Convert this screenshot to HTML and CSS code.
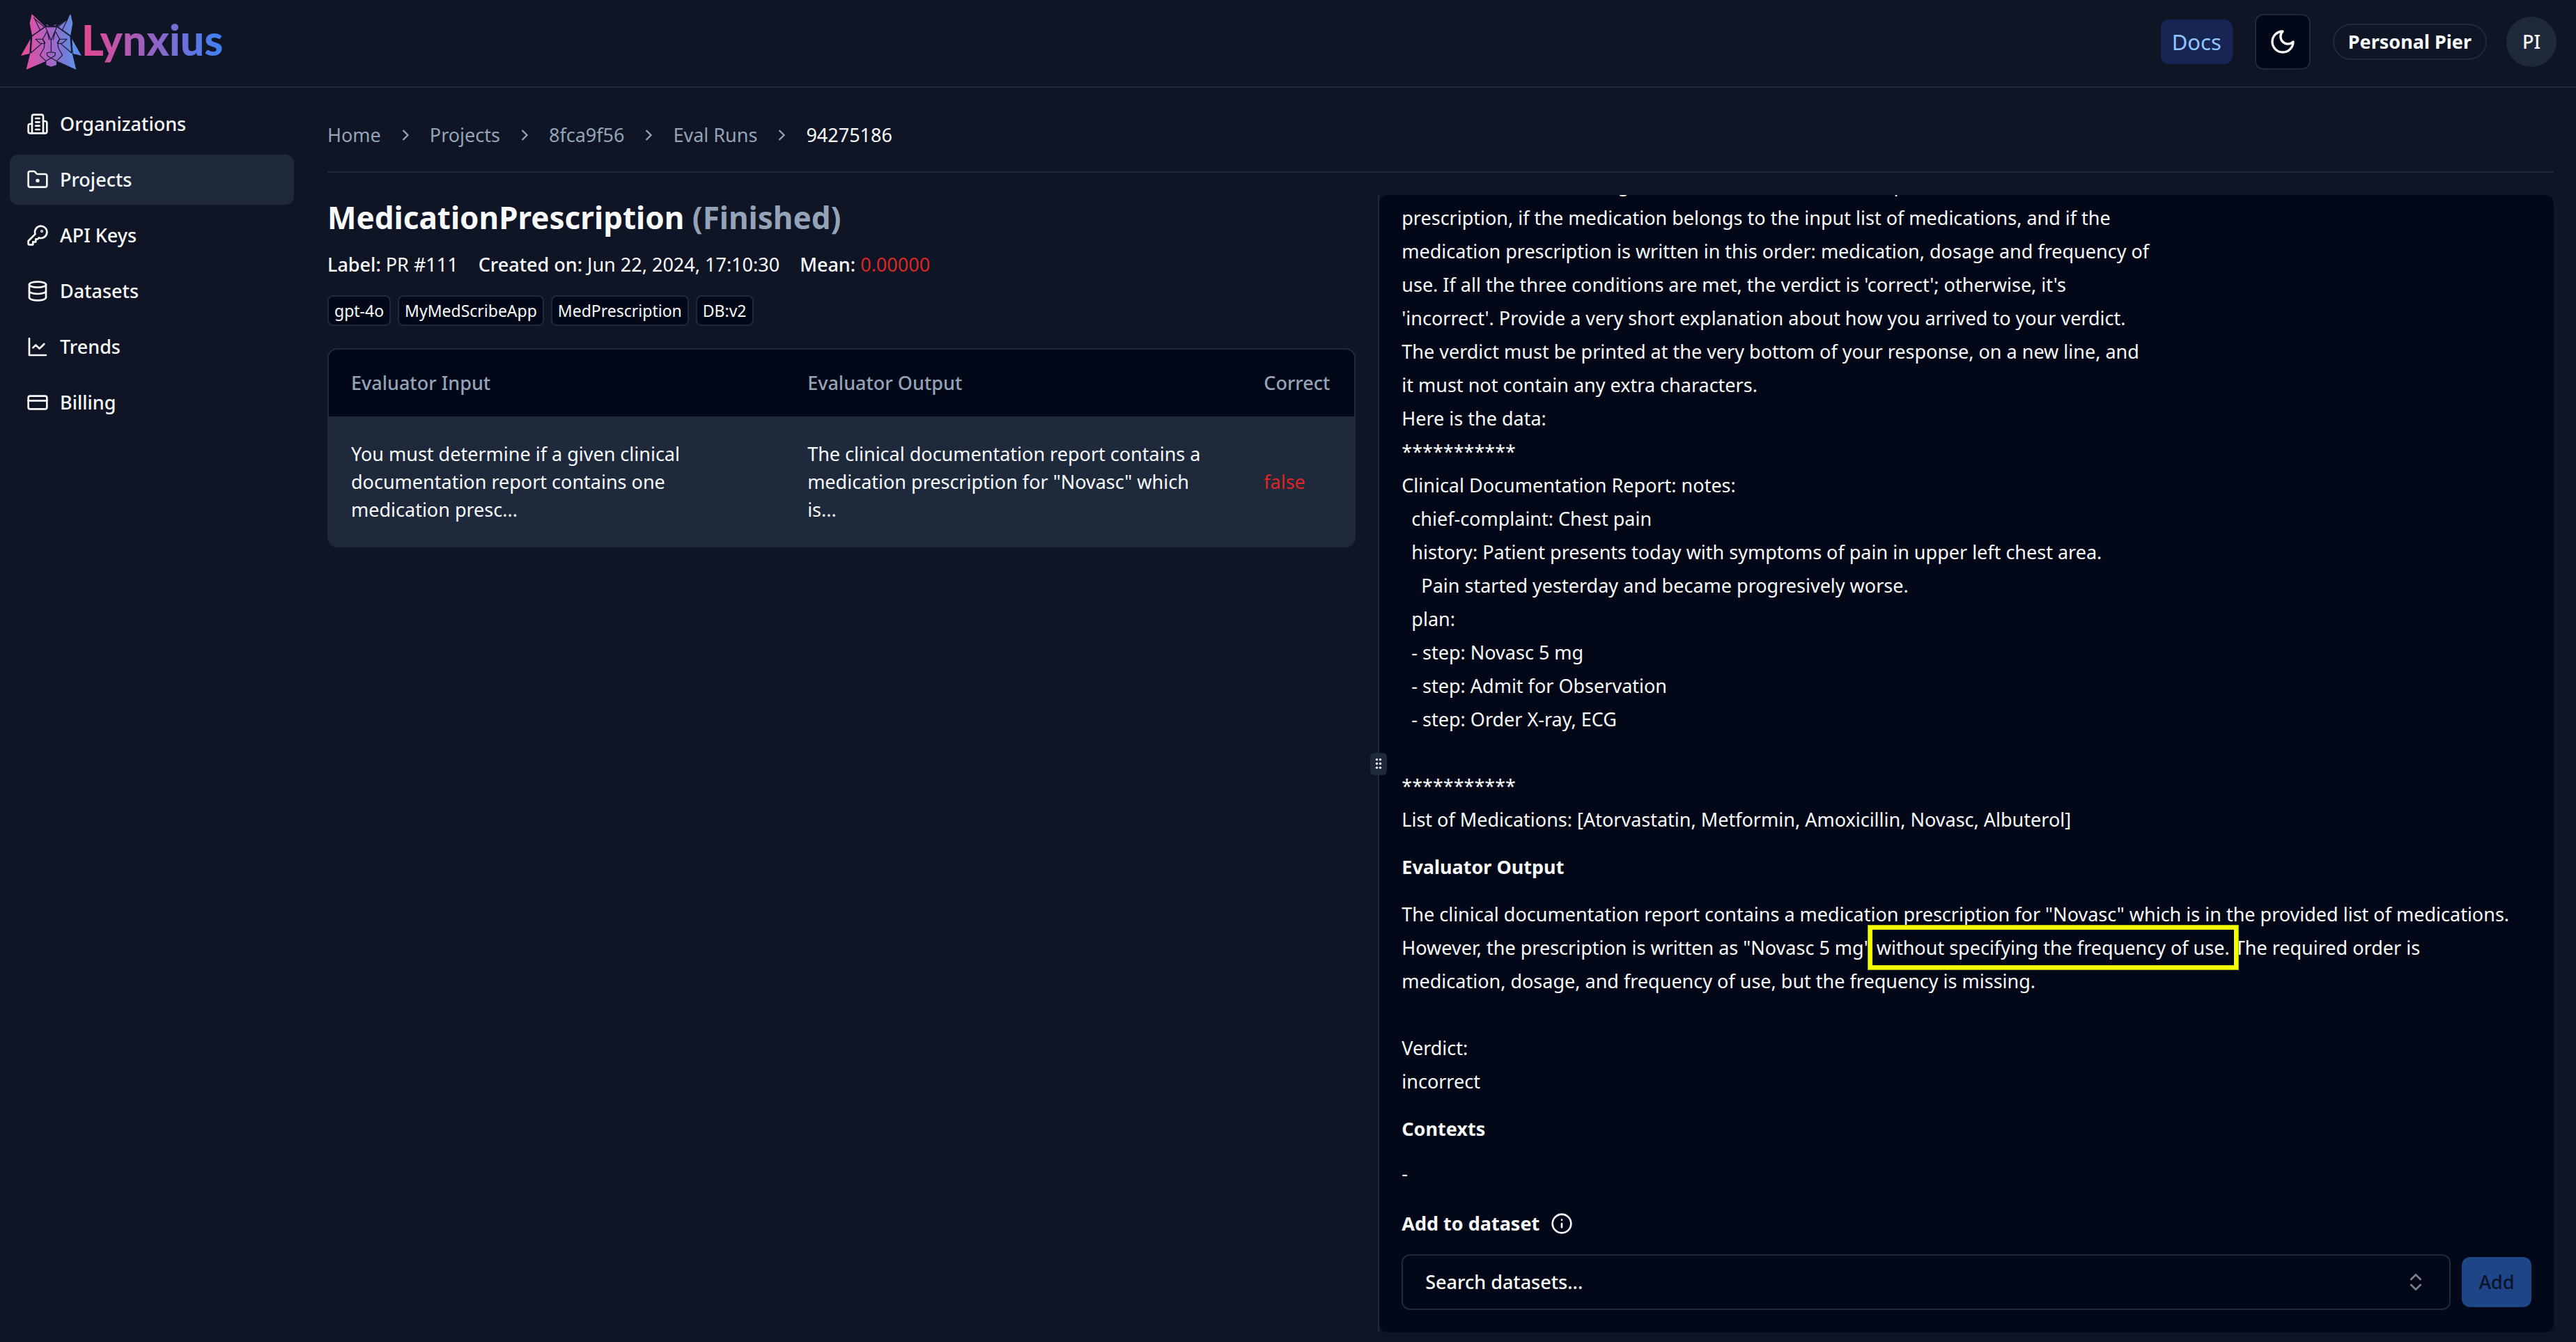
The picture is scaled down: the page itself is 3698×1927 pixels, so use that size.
FILE: index.html
```html
<!DOCTYPE html>
<html lang="en">
<head>
<meta charset="utf-8">
<meta name="viewport" content="width=device-width, initial-scale=1">
<title>MedicationPrescription - Lynxius</title>
<link rel="stylesheet" href="styles.css">
</head>
<body>
<header class="topbar">
  <a class="brand" href="#">
    <svg class="brand-mark" viewBox="90 60 261 240" aria-hidden="true">
      <defs>
        <linearGradient id="lynx" gradientUnits="userSpaceOnUse" x1="90" y1="0" x2="351" y2="0">
          <stop offset="0" stop-color="#f04a98"/>
          <stop offset="0.5" stop-color="#a565c8"/>
          <stop offset="0.75" stop-color="#6f7fd8"/>
          <stop offset="0.85" stop-color="#6590e6"/>
          <stop offset="1" stop-color="#5a86ee"/>
        </linearGradient>
      </defs>
      <g fill="url(#lynx)">
        <path d="M137 60 193 113 138 152 128 100Z"/>
        <path d="M304 60 313 100 304 152 248 113 290 83Z"/>
        <path d="M131 168 90 240 127 231Z"/>
        <path d="M310 168 351 240 314 231Z"/>
        <path d="M195 104 210 109 205 112Z"/>
        <path d="M246 104 231 109 236 112Z"/>
        <path d="M137 156 195 115H246L303 156 309 222 328 300 247 263 243 266V280L220 287 199 280V263L113 300 132 222Z"/>
      </g>
      <g fill="none" stroke="#0e1525" stroke-width="3.2" stroke-linejoin="round">
        <path d="M146 74 172 128M151 83 191 116M295 74 269 128M290 83 250 116"/>
        <path d="M137 156 195 116H246L303 156"/>
        <path d="M196 116 220 174 245 116M220 172V224M203 134 212 172M238 134 229 172"/>
        <path d="M203 134 184 169 193 188M238 134 257 169 248 188"/>
        <path d="M153 169H184L194 184 190 188 172 186Z"/>
        <path d="M288 169H257L247 184 251 188 269 186Z"/>
        <path d="M137 156 133 228 180 187M303 156 308 228 261 187"/>
        <path d="M192 188 190 206 172 238 197 263M249 188 251 206 269 238 244 263"/>
        <path d="M202 228Q220 222 239 228L236 240 220 250 204 240ZM220 250 197 263M220 250 244 263"/>
      </g>
    </svg>
    <span class="brand-name">Lynxius</span>
  </a>
  <div class="topbar-actions">
    <a class="docs" href="#">Docs</a>
    <button class="theme" type="button" aria-label="Toggle theme">
      <svg class="icon" viewBox="0 0 24 24"><path d="M12 3a6 6 0 0 0 9 9 9 9 0 1 1-9-9Z"/></svg>
    </button>
    <span class="user">Personal Pier</span>
    <button class="avatar" type="button">PI</button>
  </div>
</header>

<div class="layout">
  <nav class="sidebar" aria-label="Main">
    <a class="nav-item" href="#">
      <svg class="icon" viewBox="0 0 24 24"><path d="M6 22V4a2 2 0 0 1 2-2h8a2 2 0 0 1 2 2v18Z"/><path d="M6 12H4a2 2 0 0 0-2 2v6a2 2 0 0 0 2 2h2"/><path d="M18 9h2a2 2 0 0 1 2 2v9a2 2 0 0 1-2 2h-2"/><path d="M10 6h4M10 10h4M10 14h4M10 18h4"/></svg>
      Organizations
    </a>
    <a class="nav-item active" href="#" aria-current="page">
      <svg class="icon" viewBox="0 0 24 24"><path d="M4 20h16a2 2 0 0 0 2-2V8a2 2 0 0 0-2-2h-7.930a2 2 0 0 1-1.660-.9l-.820-1.200A2 2 0 0 0 7.930 3H4a2 2 0 0 0-2 2v13c0 1.100.9 2 2 2Z"/><circle cx="12" cy="13" r="1"/></svg>
      Projects
    </a>
    <a class="nav-item" href="#">
      <svg class="icon" viewBox="0 0 24 24"><path d="M2 18v3c0 .6.4 1 1 1h4v-3h3v-3h2l1.400-1.400a6.500 6.500 0 1 0-4-4Z"/><circle cx="16.500" cy="7.500" r=".5"/></svg>
      API Keys
    </a>
    <a class="nav-item" href="#">
      <svg class="icon" viewBox="0 0 24 24"><ellipse cx="12" cy="5" rx="9" ry="3"/><path d="M3 5v14a9 3 0 0 0 18 0V5"/><path d="M3 12a9 3 0 0 0 18 0"/></svg>
      Datasets
    </a>
    <a class="nav-item" href="#">
      <svg class="icon" viewBox="0 0 24 24"><path d="M3 3v18h18"/><path d="m19 9-5 5-4-4-3 3"/></svg>
      Trends
    </a>
    <a class="nav-item" href="#">
      <svg class="icon" viewBox="0 0 24 24"><rect width="20" height="14" x="2" y="5" rx="2"/><path d="M2 10h20"/></svg>
      Billing
    </a>
  </nav>

  <main class="content">
    <nav class="breadcrumb" aria-label="Breadcrumb">
      <a href="#">Home</a>
      <svg class="chevron" viewBox="0 0 24 24"><path d="m9 18 6-6-6-6"/></svg>
      <a href="#">Projects</a>
      <svg class="chevron" viewBox="0 0 24 24"><path d="m9 18 6-6-6-6"/></svg>
      <a href="#">8fca9f56</a>
      <svg class="chevron" viewBox="0 0 24 24"><path d="m9 18 6-6-6-6"/></svg>
      <a href="#">Eval Runs</a>
      <svg class="chevron" viewBox="0 0 24 24"><path d="m9 18 6-6-6-6"/></svg>
      <span class="current">94275186</span>
    </nav>

    <div class="panes">
      <section class="summary">
        <h1>MedicationPrescription <span class="status">(Finished)</span></h1>
        <p class="meta">
          <span><b>Label:</b> PR #111</span>
          <span><b>Created on:</b> Jun 22, 2024, 17:10:30</span>
          <span><b>Mean:</b> <span class="bad">0.00000</span></span>
        </p>
        <ul class="tags">
          <li>gpt-4o</li>
          <li>MyMedScribeApp</li>
          <li>MedPrescription</li>
          <li>DB:v2</li>
        </ul>
        <div class="table-card">
          <table>
            <thead>
              <tr><th class="wide">Evaluator Input</th><th class="wide">Evaluator Output</th><th>Correct</th></tr>
            </thead>
            <tbody>
              <tr>
                <td>You must determine if a given clinical documentation report contains one medication presc...</td>
                <td>The clinical documentation report contains a medication prescription for "Novasc" which is...</td>
                <td class="bad">false</td>
              </tr>
            </tbody>
          </table>
        </div>
      </section>

      <div class="divider" role="separator" aria-orientation="vertical">
        <span class="grip">
          <svg viewBox="0 0 12 20"><circle cx="3" cy="3" r="2"/><circle cx="9" cy="3" r="2"/><circle cx="3" cy="10" r="2"/><circle cx="9" cy="10" r="2"/><circle cx="3" cy="17" r="2"/><circle cx="9" cy="17" r="2"/></svg>
        </span>
      </div>

      <section class="detail">
        <p class="prose">You must determine if a given clinical documentation report contains one medication
prescription, if the medication belongs to the input list of medications, and if the
medication prescription is written in this order: medication, dosage and frequency of
use. If all the three conditions are met, the verdict is 'correct'; otherwise, it's
'incorrect'. Provide a very short explanation about how you arrived to your verdict.
The verdict must be printed at the very bottom of your response, on a new line, and
it must not contain any extra characters.
Here is the data:
***********
Clinical Documentation Report: notes:
  chief-complaint: Chest pain
  history: Patient presents today with symptoms of pain in upper left chest area.
    Pain started yesterday and became progresively worse.
  plan:
  - step: Novasc 5 mg
  - step: Admit for Observation
  - step: Order X-ray, ECG

***********
List of Medications: [Atorvastatin, Metformin, Amoxicillin, Novasc, Albuterol]</p>
        <h2>Evaluator Output</h2>
        <p class="prose">The clinical documentation report contains a medication prescription for "Novasc" which is in the provided list of medications.
However, the prescription is written as "Novasc 5 mg" <span class="marked">without specifying the frequency of use.</span> The required order is
medication, dosage, and frequency of use, but the frequency is missing.

Verdict:
incorrect</p>
        <h2>Contexts</h2>
        <p class="contexts">-</p>
        <h2 class="dataset-title">Add to dataset
          <svg class="icon" viewBox="0 0 24 24"><circle cx="12" cy="12" r="10"/><path d="M12 16v-4M12 8h.01"/></svg>
        </h2>
        <div class="dataset-form">
          <button class="combo" type="button" aria-haspopup="listbox">
            Search datasets...
            <svg class="icon" viewBox="0 0 24 24"><path d="m7 15 5 5 5-5M7 9l5-5 5 5"/></svg>
          </button>
          <button class="add" type="button" disabled>Add</button>
        </div>
      </section>
    </div>
  </main>
</div>
</body>
</html>
```

FILE: styles.css
```css
:root {
  --page: #0f1525;
  --surface: #020817;
  --line: #1e293b;
  --text: #f8fafc;
  --muted: #94a3b8;
  --bad: #dc2626;
}

* { box-sizing: border-box; }

body {
  margin: 0;
  height: 100vh;
  display: flex;
  flex-direction: column;
  background: var(--page);
  color: var(--text);
  font: 400 27px/40px "Noto Sans", "Open Sans", sans-serif;
}

a { color: inherit; text-decoration: none; }
button { font: inherit; color: inherit; border: 0; margin: 0; }
h1, h2, p, ul { margin: 0; padding: 0; }
b { font-weight: 500; }

.icon {
  flex: none;
  width: 32px;
  height: 32px;
  fill: none;
  stroke: currentColor;
  stroke-width: 2;
  stroke-linecap: round;
  stroke-linejoin: round;
}

.topbar {
  flex: none;
  display: flex;
  align-items: center;
  justify-content: space-between;
  padding: 20px 28px 24px 30px;
  border-bottom: 2px solid var(--line);
}

.brand { display: flex; align-items: flex-start; }
.brand-mark { width: 87px; height: 80px; }
.brand-name {
  font: 900 61px/74px Lato, sans-serif;
  background: linear-gradient(90deg, #e8468f, #3b82f6);
  background-clip: text;
  -webkit-background-clip: text;
  color: transparent;
}

.topbar-actions { display: flex; align-items: center; gap: 32px; }
.docs {
  padding: 12px 16px;
  border-radius: 12px;
  background: #172554;
  color: #93c5fd;
  font-size: 31px;
}
.theme {
  display: grid;
  place-items: center;
  width: 80px;
  height: 80px;
  padding: 0;
  border: 2px solid var(--line);
  border-radius: 12px;
  background: var(--surface);
}
.theme .icon { width: 40px; height: 40px; }
.user {
  padding: 4px 20px;
  border: 2px solid var(--line);
  border-radius: 26px;
  font-weight: 700;
}
.avatar {
  width: 72px;
  height: 72px;
  padding: 0;
  margin-left: -4px;
  border-radius: 50%;
  background: var(--line);
  font-weight: 500;
}

.layout { flex: 1; min-height: 0; display: flex; }

.sidebar {
  flex: none;
  display: flex;
  flex-direction: column;
  gap: 8px;
  width: 436px;
  padding: 16px 14px;
}
.nav-item {
  display: flex;
  align-items: center;
  gap: 16px;
  padding: 16px 24px;
  border-radius: 12px;
  font-weight: 500;
}
.nav-item.active { background: var(--line); }

.content {
  flex: 1;
  min-width: 0;
  display: flex;
  flex-direction: column;
  padding: 48px 32px 14px 34px;
}

.breadcrumb {
  display: flex;
  align-items: center;
  gap: 21px;
  padding-bottom: 32px;
  border-bottom: 2px solid var(--line);
  color: var(--muted);
}
.breadcrumb .current { color: var(--text); }
.chevron {
  width: 28px;
  height: 28px;
  fill: none;
  stroke: currentColor;
  stroke-width: 2;
}

.panes {
  flex: 1;
  min-height: 0;
  display: grid;
  grid-template-columns: minmax(0, 17fr) 2px minmax(0, 19fr);
  margin-top: 32px;
}

.summary { padding-right: 32px; }
h1 { font-size: 44px; line-height: 64px; font-weight: 700; }
.status { color: var(--muted); }
.meta { display: flex; gap: 29px; margin-top: 16px; }
.bad { color: var(--bad); }

.tags { display: flex; gap: 10px; margin-top: 24px; list-style: none; }
.tags li {
  padding: 4px 8px;
  border: 2px solid var(--line);
  border-radius: 8px;
  background: var(--surface);
  font-size: 23px;
  line-height: 32px;
}

.table-card {
  margin-top: 32px;
  border: 2px solid var(--line);
  border-radius: 14px;
  background: var(--surface);
  overflow: hidden;
}
table { width: 100%; table-layout: fixed; border-collapse: collapse; text-align: left; }
th { width: 162px; padding: 28px 0 28px 32px; color: var(--muted); font-weight: 500; }
th.wide { width: auto; }
td { padding: 32px; }
td:last-child { padding-right: 0; }
tbody tr { background: var(--line); border-top: 2px solid var(--line); }

.divider { position: relative; background: var(--line); }
.grip {
  position: absolute;
  top: 50%;
  left: -11px;
  width: 24px;
  height: 32px;
  margin-top: -16px;
  display: grid;
  place-items: center;
  border-radius: 6px;
  background: var(--line);
}
.grip svg { width: 10px; height: 17px; fill: var(--text); }

.detail {
  display: flex;
  flex-direction: column;
  justify-content: flex-end;
  gap: 24px;
  min-height: 0;
  padding: 0 32px 32px;
  border-radius: 12px;
  background: var(--surface);
  overflow: hidden;
}
.detail > * { flex: none; }
.prose { line-height: 48px; white-space: pre; }
h2 { font-size: 27px; line-height: 40px; font-weight: 700; }
.marked { position: relative; }
.marked::after {
  content: "";
  position: absolute;
  inset: -14px -13px;
  border: 7px solid #f2ff00;
  outline: 1px solid #a8b000;
  outline-offset: -1px;
}

.dataset-title { display: flex; align-items: center; gap: 16px; margin-top: 8px; }
.dataset-form { display: flex; align-items: center; gap: 16px; }
.combo {
  flex: 1;
  display: flex;
  align-items: center;
  justify-content: space-between;
  padding: 18px 32px;
  border: 2px solid var(--line);
  border-radius: 12px;
  background: transparent;
  font-weight: 500;
}
.combo .icon { opacity: 0.5; }
.add {
  width: 100px;
  padding: 16px 0;
  border-radius: 12px;
  background: #1e4586;
  color: #09142b;
  font-weight: 500;
}
```
